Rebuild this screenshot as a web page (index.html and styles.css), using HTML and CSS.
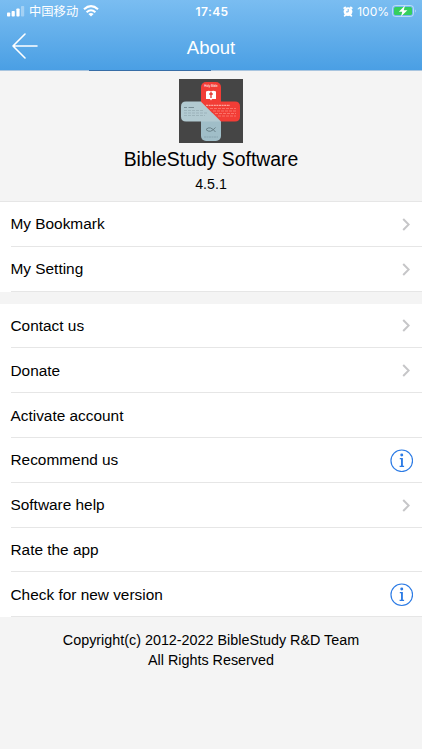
FILE: index.html
```
<!DOCTYPE html>
<html lang="en">
<head>
    <meta charset="UTF-8">
    <title>About</title>
    <link rel="stylesheet" href="styles.css">
</head>
<body>
<div class="header">
    <div class="status">
        <div class="status-left">
            <svg width="18" height="11" viewBox="0 0 18 11" fill="#fff">
                <rect x="0" y="6.5" width="3.2" height="4" rx="0.8"/>
                <rect x="4.6" y="5" width="3.2" height="5.5" rx="0.8"/>
                <rect x="9.4" y="2.5" width="3.2" height="8" rx="0.8"/>
                <rect x="14" y="0" width="3.2" height="10.5" rx="0.8" opacity="0.35"/>
            </svg>
            <span class="carrier">中国移动</span>
            <svg class="wifi" width="16" height="12" viewBox="0 0 16 12" fill="none" stroke="#fff" stroke-width="2.1">
                <path d="M1 4.3Q8 -2 15 4.3"/>
                <path d="M3.6 7.2Q8 3.3 12.4 7.2"/>
                <path d="M8 11.5L5.4 9Q8 6.9 10.6 9Z" fill="#fff" stroke="none"/>
            </svg>
        </div>
        <span class="time">17:45</span>
        <div class="status-right">
            <svg width="10" height="11" viewBox="0 0 10 11">
                <circle cx="5" cy="5.6" r="4.4" fill="#fff"/>
                <path d="M1.2 2.2L2.2 1.3M8.8 2.2L7.8 1.3M1.6 9.8L2.6 9M8.4 9.8L7.4 9" stroke="#fff" stroke-width="1.7" stroke-linecap="round"/>
                <path d="M5.2 3V5.9H3" fill="none" stroke="#65aeea" stroke-width="0.9"/>
            </svg>
            <span class="percent">100%</span>
            <svg width="25" height="12" viewBox="0 0 25 12">
                <rect x="0.5" y="0.5" width="21" height="11" rx="3" fill="none" stroke="#fff" stroke-opacity="0.5"/>
                <rect x="2" y="2" width="18" height="8" rx="1.6" fill="#35cf5d"/>
                <path d="M23 4.2Q24.6 6 23 7.8Z" fill="#fff" opacity="0.6"/>
                <path d="M13 0.5L6.8 6.8H10.3L9 11.5L15.4 5.2H11.7Z" fill="#fff"/>
            </svg>
        </div>
    </div>
    <div class="nav">
        <a class="back">
            <svg width="26" height="26" viewBox="0 0 26 26" fill="none" stroke="#fff" stroke-width="1.6" stroke-linecap="round" stroke-linejoin="round">
                <path d="M13 1L1 13L13 25M1 13H25"/>
            </svg>
        </a>
        <span class="title">About</span>
    </div>
</div>
<div class="progress"><div class="bar"></div></div>

<div class="info">
    <svg class="logo" width="64" height="64" viewBox="0 0 64 64">
        <rect width="64" height="64" fill="#454545"/>
        <rect x="22" y="3" width="20" height="30" rx="5" fill="#f23d36"/>
        <rect x="22" y="34" width="20" height="28" rx="5" fill="#a0bec8"/>
        <path d="M7 22.500H22L42 42.500H7Q2 42.500 2 37.500V27.500Q2 22.500 7 22.500Z" fill="#b2cad1"/>
        <path d="M22 22.500H56Q61 22.500 61 27.500V37.500Q61 42.500 56 42.500H42Z" fill="#f23d36"/>
        <path d="M27 12.500Q30 11 32 12.500Q34 11 37 12.500V20H33L32 21.500L31 20H27Z" fill="#fff"/>
        <path d="M32 13V19M30.200 15H33.800" stroke="#e1332d" stroke-width="1.300"/>
        <path d="M27 50.500Q31 46 36.500 53M27 50.500Q31 55 36.500 48.500" fill="none" stroke="#627980" stroke-width="0.900"/>
        <text class="logo-name" x="32" y="7.800">Holy Bible</text>
        <path d="M27 26.300H51" stroke="#ffc2bb" stroke-width="1" stroke-dasharray="2 0.600"/>
        <path d="M31 29.500H57M34 32H58M36 34.500H57M39 37H57" stroke="#ff8a80" stroke-width="0.700" stroke-dasharray="3 1"/>
        <path d="M5 28.500H8M9.500 28.500H15" stroke="#788e96" stroke-width="1"/>
        <path d="M5 31.500H24M5 34H28M5 36.500H26" stroke="#94aab1" stroke-width="0.700" stroke-dasharray="3 1"/>
        <path d="M25 58H39" stroke="#83a0aa" stroke-width="0.800" stroke-dasharray="2 0.500"/>
    </svg>
    <div class="name">BibleStudy Software</div>
    <div class="version">4.5.1</div>
</div>

<div class="list">
    <div class="item"><span>My Bookmark</span><svg class="arrow" viewBox="0 0 8 13"><path d="M1.200 1L6.700 6.500L1.200 12"/></svg></div>
    <div class="item"><span>My Setting</span><svg class="arrow" viewBox="0 0 8 13"><path d="M1.200 1L6.700 6.500L1.200 12"/></svg></div>
</div>

<div class="list list2">
    <div class="item"><span>Contact us</span><svg class="arrow" viewBox="0 0 8 13"><path d="M1.200 1L6.700 6.500L1.200 12"/></svg></div>
    <div class="item"><span>Donate</span><svg class="arrow" viewBox="0 0 8 13"><path d="M1.200 1L6.700 6.500L1.200 12"/></svg></div>
    <div class="item"><span>Activate account</span></div>
    <div class="item"><span>Recommend us</span><svg class="detail" viewBox="0 0 24 24"><circle cx="12" cy="12" r="11"/><path class="stem" d="M12.200 17.500V9.800"/><path d="M10 9.800H13M9.800 17.700H14.400"/><circle class="dot" cx="12" cy="6.200" r="1.500"/></svg></div>
    <div class="item"><span>Software help</span><svg class="arrow" viewBox="0 0 8 13"><path d="M1.200 1L6.700 6.500L1.200 12"/></svg></div>
    <div class="item"><span>Rate the app</span></div>
    <div class="item"><span>Check for new version</span><svg class="detail" viewBox="0 0 24 24"><circle cx="12" cy="12" r="11"/><path class="stem" d="M12.200 17.500V9.800"/><path d="M10 9.800H13M9.800 17.700H14.400"/><circle class="dot" cx="12" cy="6.200" r="1.500"/></svg></div>
</div>

<div class="footer">
    <div>Copyright(c) 2012-2022 BibleStudy R&amp;D Team</div>
    <div>All Rights Reserved</div>
</div>
</body>
</html>
```
FILE: styles.css
```
*{
    box-sizing: border-box;
}
body{
    display: flex;
    flex-direction: column;
    margin: 0;
    height: 750px;
    overflow: hidden;
    background-color: #fff;
    color: #000;
    font-family: "Liberation Sans", Arial, "Noto Sans CJK SC", sans-serif;
}
svg{
    display: block;
    flex: none;
}
.header{
    flex: none;
    height: 70px;
    background: linear-gradient(#7abdf1, #4a9fe4);
    color: #fff;
}
.status{
    display: grid;
    grid-template-columns: 1fr auto 1fr;
    align-items: center;
    height: 22px;
    padding: 0 5px 0 7px;
}
.status-left, .status-right{
    display: flex;
    align-items: center;
}
.status-right{
    justify-content: flex-end;
}
.carrier{
    margin-left: 4px;
    font-family: "Noto Sans CJK SC", sans-serif;
    font-size: 12.3px;
    line-height: 22px;
}
.wifi{
    margin-left: 5px;
    margin-top: -1px;
}
.time{
    font-family: Inter, sans-serif;
    font-size: 12px;
    font-weight: 600;
    letter-spacing: 0.4px;
}
.percent{
    margin: 0 3px 0 4px;
    font-family: Inter, sans-serif;
    font-size: 12px;
}
.nav{
    display: grid;
    grid-template-columns: 1fr auto 1fr;
    align-items: center;
    height: 48px;
}
.back{
    padding-left: 12px;
}
.title{
    font-size: 18.5px;
    padding-top: 3px;
}
.progress{
    flex: none;
    height: 1px;
    padding-left: 89px;
    background-color: #a9c5df;
}
.bar{
    width: 122px;
    height: 1px;
    background-color: #376da6;
}
.info{
    display: flex;
    flex: none;
    flex-direction: column;
    align-items: center;
    height: 131px;
    padding-top: 8px;
    background-color: #f4f4f4;
    border-bottom: 1px solid #e6e6e6;
}
.logo-name{
    fill: #fff;
    font-size: 3px;
    text-anchor: middle;
}
.name{
    margin-top: 4px;
    font-size: 19.4px;
    line-height: 24px;
}
.version{
    margin-top: 4px;
    font-size: 14.2px;
    line-height: 18px;
}
.list{
    padding-left: 10.5px;
}
.list2{
    border-top: 12px solid #f4f4f4;
    margin-left: 0;
}
.item{
    display: flex;
    justify-content: space-between;
    align-items: center;
    height: 44.8px;
    padding-top: 1px;
    padding-right: 9px;
    border-bottom: 1px solid #e6e6e6;
    font-size: 15.4px;
}
.arrow{
    width: 8px;
    height: 13px;
    margin-right: 3px;
    fill: none;
    stroke: #c6c6c8;
    stroke-width: 2;
}
.detail{
    width: 23.5px;
    height: 23.5px;
    fill: none;
    stroke: #2c7be5;
    stroke-width: 1.2;
}
.detail .stem{
    stroke-width: 1.9;
}
.detail .dot{
    fill: #2c7be5;
    stroke: none;
}
.footer{
    flex: 1;
    margin-bottom: 1px;
    padding-top: 13px;
    background-color: #f4f4f4;
    text-align: center;
    font-size: 14.35px;
    line-height: 20px;
}
```
